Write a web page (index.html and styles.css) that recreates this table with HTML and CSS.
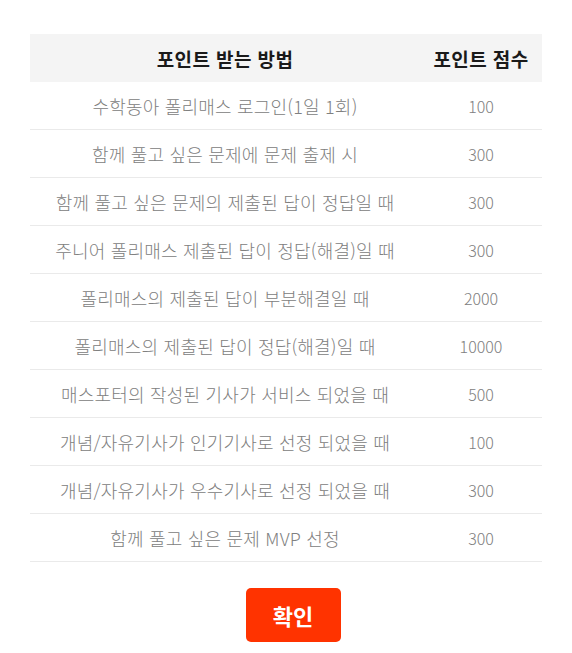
FILE: index.html
```html
<!DOCTYPE html>
<html lang="ko">
<head>
<meta charset="utf-8">
<link rel="stylesheet" href="styles.css">
</head>
<body>
<div class="wrap">
  <table class="points">
    <thead>
      <tr><th class="c1">포인트 받는 방법</th><th class="c2">포인트 점수</th></tr>
    </thead>
    <tbody>
      <tr><td>수학동아 폴리매스 로그인(1일 1회)</td><td class="num">100</td></tr>
      <tr><td>함께 풀고 싶은 문제에 문제 출제 시</td><td class="num">300</td></tr>
      <tr><td>함께 풀고 싶은 문제의 제출된 답이 정답일 때</td><td class="num">300</td></tr>
      <tr><td>주니어 폴리매스 제출된 답이 정답(해결)일 때</td><td class="num">300</td></tr>
      <tr><td>폴리매스의 제출된 답이 부분해결일 때</td><td class="num">2000</td></tr>
      <tr><td>폴리매스의 제출된 답이 정답(해결)일 때</td><td class="num">10000</td></tr>
      <tr><td>매스포터의 작성된 기사가 서비스 되었을 때</td><td class="num">500</td></tr>
      <tr><td>개념/자유기사가 인기기사로 선정 되었을 때</td><td class="num">100</td></tr>
      <tr><td>개념/자유기사가 우수기사로 선정 되었을 때</td><td class="num">300</td></tr>
      <tr><td>함께 풀고 싶은 문제 MVP 선정</td><td class="num">300</td></tr>
    </tbody>
  </table>
  <div class="actions"><button class="ok">확인</button></div>
</div>
</body>
</html>
```
FILE: styles.css
```css
html, body { margin: 0; padding: 0; background: #fff; }
body { font-family: "Noto Sans CJK KR", "Noto Sans", sans-serif; }
.wrap { padding: 34px 30px 0; width: 512px; }
.points { width: 512px; border-collapse: collapse; table-layout: fixed; }
.points th { height: 48px; background: #f4f4f4; font-size: 19px; font-weight: 700; color: #1a1a1a; text-align: center; padding: 0; letter-spacing: 0.4px; }
.points .c1 { width: 390px; }
.points .c2 { width: 122px; }
.points td { height: 47px; border-bottom: 1px solid #eaeaea; font-size: 18px; font-weight: 300; color: #808080; text-align: center; padding: 0; letter-spacing: 0.2px; }
.points td.num { font-size: 16px; letter-spacing: 0; }
.actions { display: flex; justify-content: center; margin-top: 26px; padding-left: 14px; }
.ok { width: 95px; height: 54px; border: 0; border-radius: 5px; background: #ff3300; color: #fff; font-family: inherit; font-size: 22px; font-weight: 700; padding: 0; }
```
